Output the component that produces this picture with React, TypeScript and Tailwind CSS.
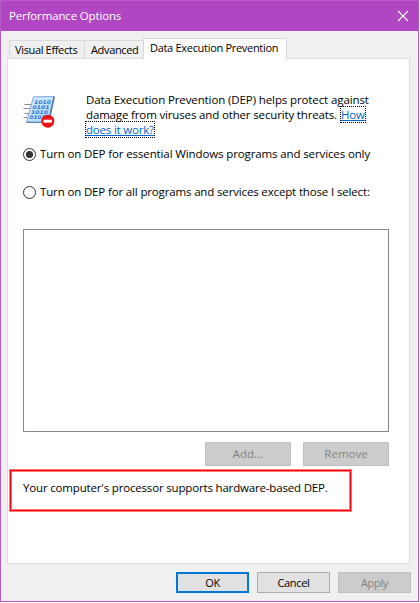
import React from "react";

function DepIcon() {
  return (
    <svg width="33" height="34" viewBox="0 0 33 34" className="mt-[3px] block">
      <defs>
        <linearGradient id="sheet" x1="0" y1="0" x2="1" y2="1">
          <stop offset="0" stopColor="#d2ecff" />
          <stop offset="0.6" stopColor="#bfe2fc" />
          <stop offset="1" stopColor="#8fc4f4" />
        </linearGradient>
      </defs>
      <g stroke="#8c8c94" strokeWidth="1.2">
        <path d="M1.5 9.5h8M0.5 13.5h8M1.5 18.5h6M0.5 22.5h5" />
      </g>
      <path d="M10.5 1.8L31 1.5L25.5 27.5L3.5 27Z" fill="url(#sheet)" stroke="#86a9dc" />
      <path d="M31.2 1.5L25.7 27" stroke="#4f73b4" strokeWidth="1.5" />
      <path d="M3.5 27.3L25 27.5" stroke="#5f83c1" strokeWidth="1.2" />
      <g fill="#2f76cf" fontFamily="DejaVu Sans, sans-serif" fontWeight="bold" fontStyle="italic" fontSize="5">
        <text x="11" y="8.8" textLength="17" lengthAdjust="spacingAndGlyphs">1010</text>
        <text x="9.5" y="13.9" textLength="17" lengthAdjust="spacingAndGlyphs">0101</text>
        <text x="8" y="19" textLength="17" lengthAdjust="spacingAndGlyphs">1010</text>
        <text x="6.5" y="24.1" textLength="16" lengthAdjust="spacingAndGlyphs">0101</text>
      </g>
      <circle cx="24.8" cy="26.2" r="6.5" fill="#ec1114" />
      <rect x="20.5" y="24.7" width="8.4" height="3" fill="#fff" />
    </svg>
  );
}

function Radio({ checked, label, tracking }: { checked?: boolean; label: string; tracking: string }) {
  return (
    <label className="flex h-[13px] items-center">
      <svg width="13" height="13" viewBox="0 0 13 13" className="mr-[4px] shrink-0">
        <circle cx="6.5" cy="6.5" r="6" fill="#fff" stroke="#333" />
        {checked && <circle cx="6.5" cy="6.5" r="3.6" fill="#333" />}
      </svg>
      <span className={tracking}>{label}</span>
    </label>
  );
}

export default function App() {
  return (
    <div className="h-[603px] w-[420px] overflow-hidden bg-white">
      <div className="flex h-[602px] w-[419px] flex-col border border-[#b75bc6] bg-[#f0f0f0] font-['Open_Sans','Noto_Sans',sans-serif] text-[11.5px] leading-[15px] whitespace-nowrap text-black">
        <header className="flex h-[30px] shrink-0 items-center justify-between bg-[#b146c2] pr-[9px] pl-[8px] text-white">
          <span className="pb-[2px] tracking-[-0.15px]">Performance Options</span>
          <svg width="12" height="12" viewBox="0 0 12 12" className="mb-[1px]">
            <path d="M1 1L11 11M11 1L1 11" stroke="#fff" strokeWidth="1.1" />
          </svg>
        </header>
        <nav className="mt-[7px] flex h-[20px] shrink-0 items-end pl-[8px] text-[11px]">
          <div className="flex h-[18px] w-[75px] items-center border-t border-l border-[#d9d9d9] pl-[5px] tracking-[-0.35px]">Visual Effects</div>
          <div className="flex h-[18px] w-[59px] items-center border-t border-l border-[#d9d9d9] pl-[6px] tracking-[-0.35px]">Advanced</div>
          <div className="z-10 -mb-px flex h-[21px] w-[144px] items-center border-x border-t border-[#d9d9d9] bg-white pb-[3px] pl-[6px] tracking-[-0.3px]">Data Execution Prevention</div>
        </nav>
        <main className="ml-[6px] flex h-[506px] w-[403px] shrink-0 flex-col border border-[#dcdcdc] bg-white">
          <div className="mt-[33px] flex h-[45px] shrink-0 pl-[15px]">
            <DepIcon />
            <div className="ml-[30px]">
              <div className="tracking-[-0.11px]">Data Execution Prevention (DEP) helps protect against</div>
              <div className="flex">
                <span className="w-[255px] tracking-[-0.15px]">damage from viruses and other security threats.</span>
                <a className="w-[24px] tracking-[-0.2px] text-[#0066cc] underline outline-1 outline-black outline-dotted">How</a>
              </div>
              <a className="block w-[68px] tracking-[-0.2px] text-[#0066cc] underline outline-1 outline-black outline-dotted">does it work?</a>
            </div>
          </div>
          <div className="mt-[11px] flex flex-col gap-[25px] pl-[15px]">
            <Radio checked label="Turn on DEP for essential Windows programs and services only" tracking="pb-[2px] tracking-[-0.12px]" />
            <Radio label="Turn on DEP for all programs and services except those I select:" tracking="pb-[2px] tracking-[-0.15px]" />
          </div>
          <div className="mt-[30px] ml-[15px] h-[203px] w-[366px] shrink-0 border border-[#828790]" />
          <div className="mt-[10px] ml-[197px] flex gap-[12px] text-[#838383]">
            <div className="flex h-[24px] w-[86px] items-center justify-center border border-[#bfbfbf] bg-[#cccccc] pb-[2px]">Add...</div>
            <div className="flex h-[24px] w-[86px] items-center justify-center border border-[#bfbfbf] bg-[#cccccc] pb-[2px]">Remove</div>
          </div>
          <div className="mt-[3px] ml-px h-[43px] w-[343px] border border-[#f77e80]">
            <div className="h-full border border-[#fb0007]">
              <div className="h-full border border-[#f77e80] pt-[8px] pl-[11px] tracking-[-0.17px]">Your computer's processor supports hardware-based DEP.</div>
            </div>
          </div>
        </main>
        <footer className="mt-[8px] ml-[175px] flex gap-[8px] text-[11px] tracking-[-0.35px]">
          <div className="flex h-[21px] w-[73px] items-center justify-center border-2 border-[#0078d7] bg-[#e1e1e1]">OK</div>
          <div className="flex h-[21px] w-[73px] items-center justify-center border border-[#adadad] bg-[#e1e1e1]">Cancel</div>
          <div className="flex h-[21px] w-[73px] items-center justify-center border border-[#bfbfbf] bg-[#cccccc] text-[#838383]">Apply</div>
        </footer>
      </div>
    </div>
  );
}
